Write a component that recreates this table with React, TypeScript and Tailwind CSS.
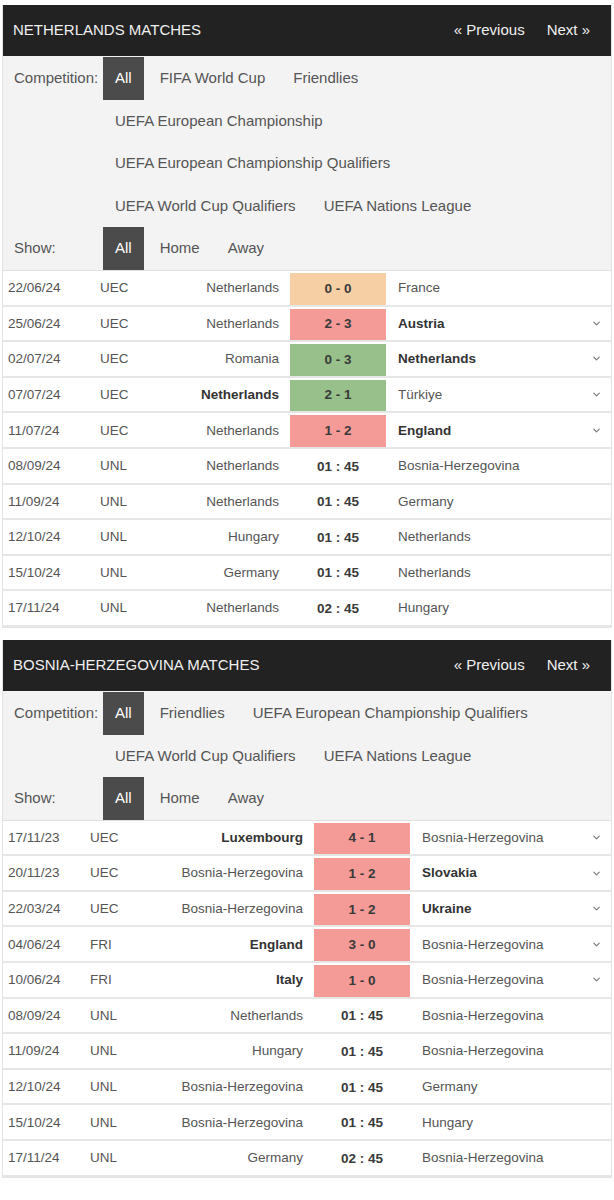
import { ChevronDown } from 'lucide-react';

type TMatch = {
  date: string;
  comp: string;
  home: string;
  away: string;
  score: string;
  result?: 'win' | 'loss' | 'draw';
  bold?: 'home' | 'away';
  more?: boolean;
};

type TPanel = {
  title: string;
  compLines: string[][];
  cols: string;
  matches: TMatch[];
};

const resultBg = {
  win: 'bg-[#97c08a]',
  loss: 'bg-[#f49b98]',
  draw: 'bg-[#f6cfa4]',
};

const upcoming = (date: string, home: string, away: string, time = '01 : 45'): TMatch => ({
  date,
  comp: 'UNL',
  home,
  away,
  score: time,
});

const panels: TPanel[] = [
  {
    title: 'Netherlands Matches',
    compLines: [
      ['All', 'FIFA World Cup', 'Friendlies'],
      ['UEFA European Championship'],
      ['UEFA European Championship Qualifiers'],
      ['UEFA World Cup Qualifiers', 'UEFA Nations League'],
    ],
    cols: 'grid-cols-[92px_60px_134px_98px_1fr_32px]',
    matches: [
      { date: '22/06/24', comp: 'UEC', home: 'Netherlands', away: 'France', score: '0 - 0', result: 'draw' },
      { date: '25/06/24', comp: 'UEC', home: 'Netherlands', away: 'Austria', score: '2 - 3', result: 'loss', bold: 'away', more: true },
      { date: '02/07/24', comp: 'UEC', home: 'Romania', away: 'Netherlands', score: '0 - 3', result: 'win', bold: 'away', more: true },
      { date: '07/07/24', comp: 'UEC', home: 'Netherlands', away: 'Türkiye', score: '2 - 1', result: 'win', bold: 'home', more: true },
      { date: '11/07/24', comp: 'UEC', home: 'Netherlands', away: 'England', score: '1 - 2', result: 'loss', bold: 'away', more: true },
      upcoming('08/09/24', 'Netherlands', 'Bosnia-Herzegovina'),
      upcoming('11/09/24', 'Netherlands', 'Germany'),
      upcoming('12/10/24', 'Hungary', 'Netherlands'),
      upcoming('15/10/24', 'Germany', 'Netherlands'),
      upcoming('17/11/24', 'Netherlands', 'Hungary', '02 : 45'),
    ],
  },
  {
    title: 'Bosnia-Herzegovina Matches',
    compLines: [
      ['All', 'Friendlies', 'UEFA European Championship Qualifiers'],
      ['UEFA World Cup Qualifiers', 'UEFA Nations League'],
    ],
    cols: 'grid-cols-[82px_60px_168px_98px_1fr_32px]',
    matches: [
      { date: '17/11/23', comp: 'UEC', home: 'Luxembourg', away: 'Bosnia-Herzegovina', score: '4 - 1', result: 'loss', bold: 'home', more: true },
      { date: '20/11/23', comp: 'UEC', home: 'Bosnia-Herzegovina', away: 'Slovakia', score: '1 - 2', result: 'loss', bold: 'away', more: true },
      { date: '22/03/24', comp: 'UEC', home: 'Bosnia-Herzegovina', away: 'Ukraine', score: '1 - 2', result: 'loss', bold: 'away', more: true },
      { date: '04/06/24', comp: 'FRI', home: 'England', away: 'Bosnia-Herzegovina', score: '3 - 0', result: 'loss', bold: 'home', more: true },
      { date: '10/06/24', comp: 'FRI', home: 'Italy', away: 'Bosnia-Herzegovina', score: '1 - 0', result: 'loss', bold: 'home', more: true },
      upcoming('08/09/24', 'Netherlands', 'Bosnia-Herzegovina'),
      upcoming('11/09/24', 'Hungary', 'Bosnia-Herzegovina'),
      upcoming('12/10/24', 'Bosnia-Herzegovina', 'Germany'),
      upcoming('15/10/24', 'Bosnia-Herzegovina', 'Hungary'),
      upcoming('17/11/24', 'Germany', 'Bosnia-Herzegovina', '02 : 45'),
    ],
  },
];

const FilterItem = ({ label }: { label: string }) => {
  const active = label === 'All';
  return (
    <span
      className={`h-full flex items-center px-3 mr-1 whitespace-nowrap ${active ? 'bg-[#4b4b4b] text-white' : 'text-[#555]'}`}
    >
      {label}
    </span>
  );
};

const FilterRow = ({ label, items }: { label?: string; items: string[] }) => (
  <div className="flex h-[42.6px] items-center">
    <span className="w-[100px] pl-[11px] text-[#555]">{label}</span>
    <div className="flex h-full items-center">
      {items.map((it) => (
        <FilterItem key={it} label={it} />
      ))}
    </div>
  </div>
);

const MatchRow = ({ m, cols }: { m: TMatch; cols: string }) => (
  <div className={`grid ${cols} h-[35.6px] border-b-2 border-[#e6e6e6] bg-white text-[13.5px] text-[#555]`}>
    <div className="flex items-center pl-[5px] pt-[1px]">{m.date}</div>
    <div className="flex items-center pl-[5px] pt-[1px]">{m.comp}</div>
    <div className={`flex items-center justify-end pr-[10px] pt-[1px] whitespace-nowrap ${m.bold === 'home' ? 'font-bold text-[#333]' : ''}`}>
      {m.home}
    </div>
    <div className="flex pt-[2px] px-[1px]">
      <div
        className={`flex flex-1 items-center justify-center font-bold text-[#3a3a3a] ${m.result ? resultBg[m.result] : ''}`}
      >
        {m.score}
      </div>
    </div>
    <div className={`flex items-center pl-[11px] pt-[1px] whitespace-nowrap ${m.bold === 'away' ? 'font-bold text-[#333]' : ''}`}>
      {m.away}
    </div>
    <div className="flex items-center justify-center pl-[2px]">
      {m.more && <ChevronDown size={11} strokeWidth={2.6} className="text-[#7a7a7a]" />}
    </div>
  </div>
);

const MatchPanel = ({ panel }: { panel: TPanel }) => (
  <div className="border-x border-b border-[#e3e3e3]">
    <div className="flex h-[51px] items-center justify-between bg-[#222] pl-[10px] pr-[10px] text-[15px] text-[#f0f0f0]">
      <h2 className="uppercase">{panel.title}</h2>
      <div className="flex">
        <span className="px-[11px]">« Previous</span>
        <span className="px-[11px]">Next »</span>
      </div>
    </div>
    <div className="bg-[#f3f3f3] pt-[1px] text-[15px]">
      {panel.compLines.map((line, i) => (
        <FilterRow key={i} label={i === 0 ? 'Competition:' : undefined} items={line} />
      ))}
      <FilterRow label="Show:" items={['All', 'Home', 'Away']} />
    </div>
    <div className="border-t border-[#e0e0e0]">
      {panel.matches.map((m, i) => (
        <MatchRow key={i} m={m} cols={panel.cols} />
      ))}
    </div>
  </div>
);

const App = () => {
  return (
    <div className="w-[614px] min-h-[1200px] bg-white pt-[5px] pl-[2px] pr-[2px] font-['Liberation_Sans',Arial,sans-serif]">
      <div className="flex flex-col gap-[12px]">
        {panels.map((p) => (
          <MatchPanel key={p.title} panel={p} />
        ))}
      </div>
    </div>
  );
};

export default App;
